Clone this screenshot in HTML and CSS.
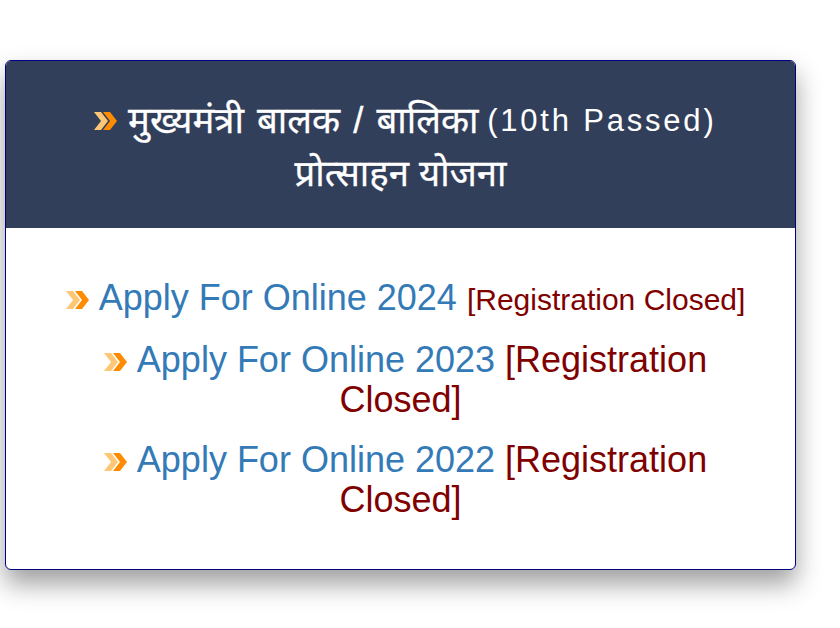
FILE: index.html
```html
<!DOCTYPE html>
<html lang="hi">
<head>
<meta charset="utf-8">
<title>Yojana</title>
<link rel="stylesheet" href="styles.css">
</head>
<body>
<div class="card">
  <div class="card-head">
    <h2 class="title"><svg class="arrow arrow-head" viewBox="0 0 26 24"><polygon class="c1" points="1,3 8,3 15,12 8,21 1,21 8,12"/><polygon class="c2" points="10,3 17,3 24,12 17,21 10,21 17,12"/></svg> <span class="dev dev-wide">मुख्यमंत्री बालक / बालिका</span> <span class="lat">(10th Passed)</span><br><span class="dev">प्रोत्साहन योजना</span></h2>
  </div>
  <ul class="links">
    <li><svg class="arrow" viewBox="0 0 26 24"><polygon class="c1" points="1,3 8,3 15,12 8,21 1,21 8,12"/><polygon class="c2" points="10,3 17,3 24,12 17,21 10,21 17,12"/></svg> <a class="apply" href="#">Apply For Online 2024</a> <small class="closed">[Registration Closed]</small></li>
    <li><svg class="arrow" viewBox="0 0 26 24"><polygon class="c1" points="1,3 8,3 15,12 8,21 1,21 8,12"/><polygon class="c2" points="10,3 17,3 24,12 17,21 10,21 17,12"/></svg> <a class="apply" href="#">Apply For Online 2023</a> <span class="closed">[Registration Closed]</span></li>
    <li><svg class="arrow" viewBox="0 0 26 24"><polygon class="c1" points="1,3 8,3 15,12 8,21 1,21 8,12"/><polygon class="c2" points="10,3 17,3 24,12 17,21 10,21 17,12"/></svg> <a class="apply" href="#">Apply For Online 2022</a> <span class="closed">[Registration Closed]</span></li>
  </ul>
</div>
</body>
</html>
```
FILE: styles.css
```css
html, body {
  margin: 0;
  padding: 0;
  background: #ffffff;
}
body {
  font-family: "Liberation Sans", Arial, "Noto Sans Devanagari", "Noto Sans", sans-serif;
  min-height: 628px;
  padding-bottom: 1px;
  box-sizing: border-box;
}
.card {
  margin: 60px 0 0 5px;
  width: 789px;
  border: 1px solid #000080;
  border-radius: 6px;
  overflow: hidden;
  background: #ffffff;
  box-shadow: 0 14px 26px rgba(0, 0, 0, 0.38);
}
.card-head {
  background: #323f5b;
  height: 167px;
  box-sizing: border-box;
  padding-top: 34px;
}
.title {
  margin: 0;
  color: #ffffff;
  font-weight: normal;
  font-size: 31px;
  line-height: 51px;
  text-align: center;
}
.dev {
  font-size: 36.5px;
  -webkit-text-stroke: 0.3px #ffffff;
}
.dev-wide {
  word-spacing: 3px;
}
.lat {
  letter-spacing: 2.8px;
  vertical-align: 2px;
}
.arrow {
  width: 26px;
  height: 24px;
  margin-left: 9px;
  vertical-align: -2px;
  filter: blur(0.5px);
}
.arrow-head {
  vertical-align: 0;
}
.c1 { fill: #ffc676; }
.c2 { fill: #ff8c00; }
.links {
  list-style: none;
  margin: 0;
  padding: 50px 40px 49px;
  text-align: center;
  font-size: 36px;
  line-height: 40px;
}
.links li {
  margin-bottom: 20px;
}
.links li:last-child {
  margin-bottom: 0;
}
.apply {
  color: #337ab7;
  text-decoration: none;
}
.closed {
  color: #800000;
}
small.closed {
  font-size: 30px;
}
```
